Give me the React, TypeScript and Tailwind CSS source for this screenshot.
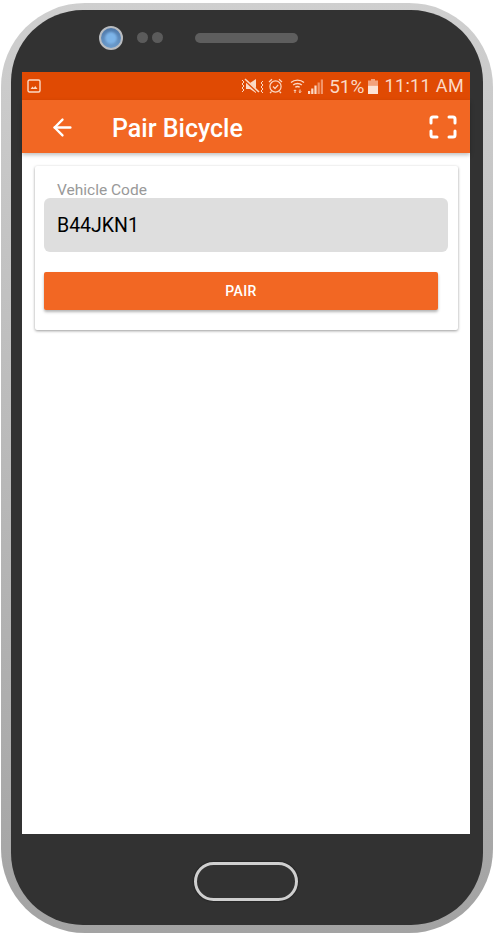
import { ArrowLeft } from "lucide-react";

function ImageIcon() {
  return (
    <svg width="14" height="14" viewBox="0 0 14 14" fill="none">
      <rect x="1" y="1" width="12" height="12" rx="1.5" stroke="#fbd9c5" strokeWidth="1.4" />
      <path d="M3.5 10 L5.5 7.5 L6.8 9 L8.3 7 L10.5 10 Z" fill="#fbd9c5" />
    </svg>
  );
}

function MuteIcon() {
  return (
    <svg width="23" height="17" viewBox="0 0 23 17" fill="none">
      <path d="M1 2 L3 4 L1 6 L3 8 L1 10 L3 12 L1 14" stroke="#fbd9c5" strokeWidth="1" />
      <path d="M22 3 L20 5 L22 7 L20 9 L22 11 L20 13 L22 15" stroke="#fbd9c5" strokeWidth="1" />
      <path d="M5 5 H9 L15 1 V15 L9 11 H5 Z" fill="#fbd9c5" />
      <path d="M4 2 L18 15" stroke="#e04a03" strokeWidth="2.6" />
      <path d="M4 1 L18 14" stroke="#fbd9c5" strokeWidth="1.6" />
    </svg>
  );
}

function AlarmIcon() {
  return (
    <svg width="15" height="16" viewBox="0 0 15 16" fill="none" stroke="#fbd9c5">
      <circle cx="7.5" cy="8.5" r="5.6" strokeWidth="1.2" />
      <path d="M5 8.5 L7 10.5 L10.2 6.8" strokeWidth="1.2" />
      <path d="M1 4 L4 1.2 M14 4 L11 1.2 M3.5 13.5 L2 15.2 M11.5 13.5 L13 15.2" strokeWidth="1.2" />
    </svg>
  );
}

function WifiIcon() {
  return (
    <svg width="15" height="16" viewBox="0 0 15 16" fill="none" stroke="#fbd9c5">
      <path d="M1 4.5 C4.5 1.2 10.5 1.2 14 4.5" strokeWidth="1.3" />
      <path d="M3.2 7 C5.5 5 9.5 5 11.8 7" strokeWidth="1.3" />
      <path d="M5.3 9.3 C6.5 8.4 8.5 8.4 9.7 9.3" strokeWidth="1.3" />
      <path d="M5 12 V15 M3.8 13 L5 11.8 L6.2 13 M10 11.5 V14.5 M8.8 13.5 L10 14.7 L11.2 13.5" strokeWidth="1" />
    </svg>
  );
}

function SignalIcon() {
  return (
    <svg width="15" height="15" viewBox="0 0 15 15">
      <rect x="0" y="12" width="2.2" height="3" fill="#fbd9c5" />
      <rect x="3.2" y="9.5" width="2.2" height="5.5" fill="#fbd9c5" />
      <rect x="6.4" y="6.5" width="2.2" height="8.5" fill="#fbd9c5" />
      <rect x="9.6" y="3.5" width="2.2" height="11.5" fill="#f29468" />
      <rect x="12.8" y="0.5" width="2.2" height="14.5" fill="#f29468" />
    </svg>
  );
}

function BatteryIcon() {
  return (
    <svg width="10" height="15" viewBox="0 0 10 15">
      <rect x="3" y="0" width="4" height="2" fill="#f3a27c" />
      <rect x="0" y="1.5" width="10" height="5" fill="#f3a27c" />
      <rect x="0" y="6.5" width="10" height="8.5" fill="#fde3d5" />
    </svg>
  );
}

function ScanIcon() {
  return (
    <svg width="28" height="24" viewBox="0 0 28 24" fill="none" stroke="white" strokeWidth="3" strokeLinecap="round" strokeLinejoin="round">
      <path d="M2 8 V4 Q2 2 4 2 H8" />
      <path d="M20 2 H24 Q26 2 26 4 V8" />
      <path d="M26 16 V20 Q26 22 24 22 H20" />
      <path d="M8 22 H4 Q2 22 2 20 V16" />
    </svg>
  );
}

export default function App() {
  return (
    <div className="h-[939px] w-[496px] overflow-hidden bg-white pl-px pt-[3px] font-['Roboto',sans-serif]">
      <div className="h-[930px] w-[492px] rounded-[84px] bg-gradient-to-b from-[#cfcfcf] to-[#a3a3a3] pb-2 pl-[10px] pr-[10px] pt-[7px]">
        <div className="flex h-[915px] w-[472px] flex-col rounded-[72px] bg-[#323232] pl-[11px] pr-[13px]">
          {/* earpiece row */}
          <div className="flex h-[62px] items-start pl-[77px] pt-4">
            <div className="flex h-6 w-6 items-center justify-center rounded-full border-2 border-[#b9bcc0] bg-gradient-to-b from-[#4f78a8] to-[#6c9ccd]">
              <div className="h-3 w-3 rounded-full bg-[#7db4e8] blur-[1px]" />
            </div>
            <div className="ml-[14px] mt-[6px] h-[11px] w-[11px] rounded-full bg-[#5b5b5b]" />
            <div className="ml-1 mt-[6px] h-[11px] w-[11px] rounded-full bg-[#5b5b5b]" />
            <div className="ml-[32px] mt-[7px] h-[10px] w-[103px] rounded-full bg-[#5e5e5e]" />
          </div>

          {/* screen */}
          <div className="flex h-[762px] w-[448px] flex-col bg-white">
            <div className="flex h-7 items-center bg-[#e04a03] pl-[5px] pr-[6px] text-[#fbd9c5]">
              <ImageIcon />
              <div className="ml-auto flex items-center">
                <MuteIcon />
                <div className="ml-[4px]"><AlarmIcon /></div>
                <div className="ml-[7px]"><WifiIcon /></div>
                <div className="ml-[3px]"><SignalIcon /></div>
                <span className="ml-[6px] text-[19px] leading-none">51%</span>
                <div className="ml-1"><BatteryIcon /></div>
                <span className="ml-[6px] text-[18px] leading-none tracking-[0.35px]">11:11 AM</span>
              </div>
            </div>
            <div className="flex h-[53px] items-center bg-[#f26723] pl-[27px] pr-[13px] shadow-[0_2px_4px_rgba(0,0,0,0.25)]">
              <div className="pt-[2px]"><ArrowLeft size={27} color="white" strokeWidth={2.1} /></div>
              <span className="ml-[36px] pt-[3px] text-[25px] font-medium leading-none text-white">Pair Bicycle</span>
              <div className="ml-auto"><ScanIcon /></div>
            </div>

            {/* card */}
            <div className="ml-[13px] mt-[13px] h-[164px] w-[423px] rounded-[2px] bg-white pl-[9px] pt-[17px] shadow-[0_1px_3px_rgba(0,0,0,0.4)]">
              <div className="pl-[13px] text-[15.5px] leading-[15px] text-[#999999]">Vehicle Code</div>
              <div className="flex h-[54px] w-[404px] items-center rounded-md bg-[#dedede] pl-[13px] pt-[2px] text-[19.5px] text-black">
                B44JKN1
              </div>
              <button className="mt-5 flex h-[38px] w-[394px] items-center justify-center rounded-[2px] bg-[#f26723] text-[14px] font-medium tracking-[0.4px] text-white shadow-[0_2px_3px_rgba(0,0,0,0.3)]">
                PAIR
              </button>
            </div>
          </div>

          {/* home button */}
          <div className="flex flex-1 justify-center pt-[28px]">
            <div className="h-[39px] w-[104px] rounded-full border-[3px] border-[#cfcfcf] bg-[#323232] shadow-[0_0_2px_rgba(0,0,0,0.8)]" />
          </div>
        </div>
      </div>
    </div>
  );
}
